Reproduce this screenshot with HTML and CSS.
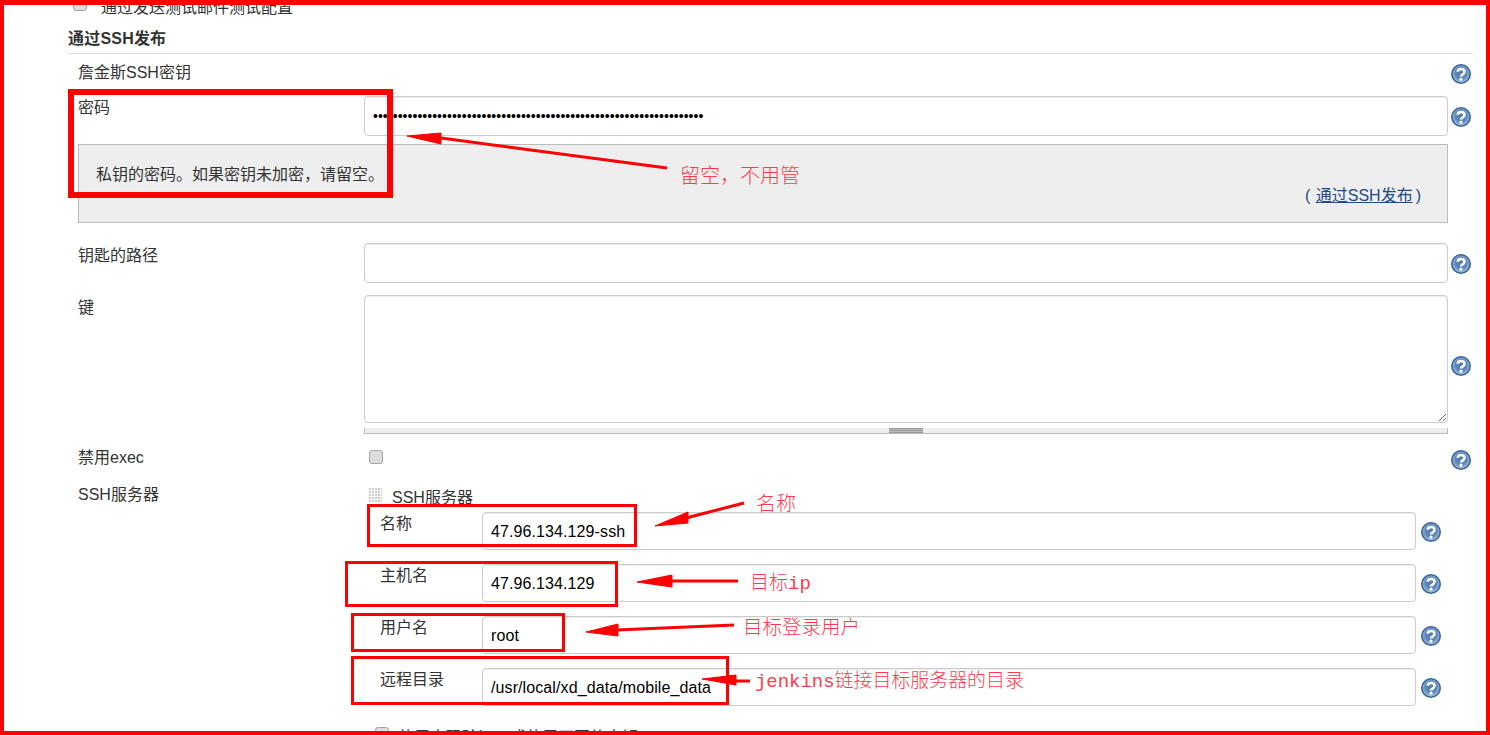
FILE: index.html
```html
<!DOCTYPE html>
<html lang="zh-CN">
<head>
<meta charset="utf-8">
<title>通过SSH发布</title>
<link rel="stylesheet" href="styles.css">
</head>
<body>
<svg class="defs" width="0" height="0" aria-hidden="true">
  <defs>
    <radialGradient id="helpfill" cx="50%" cy="45%" r="58%">
      <stop offset="0" stop-color="#4f7ab2"/>
      <stop offset="0.6" stop-color="#5f88bc"/>
      <stop offset="1" stop-color="#b4c8e0"/>
    </radialGradient>
    <symbol id="help" viewBox="0 0 20 20">
      <circle cx="10" cy="10" r="10" fill="#36649e"/>
      <circle cx="10" cy="10" r="8.4" fill="url(#helpfill)"/>
      <path d="M6.7 7.8C6.8 4.3 13.4 4.1 13.5 7.9C13.6 10.5 10 10.2 10 12.6" fill="none" stroke="#fff" stroke-width="2.5"/>
      <circle cx="10" cy="15.2" r="1.6" fill="#fff"/>
    </symbol>
  </defs>
</svg>

<main class="page">
  <div class="top-row">
    <input class="check check-top" type="checkbox">
    <span>通过发送测试邮件测试配置</span>
  </div>
  <h2 class="heading">通过SSH发布</h2>

  <div class="form">
    <div class="row row-first">
      <div class="label">詹金斯SSH密钥</div>
      <div></div>
      <svg class="help"><use href="#help"/></svg>
    </div>

    <div class="row">
      <div class="label label-top2">密码</div>
      <input class="field field-40 field-pass" type="password" value="...................................................................">
      <svg class="help help-mid"><use href="#help"/></svg>
    </div>

    <div class="helpbox">
      <div>私钥的密码。如果密钥未加密，请留空。</div>
      <div class="helpbox-from">( <a href="#">通过SSH发布</a>)</div>
    </div>

    <div class="row row-path">
      <div class="label label-top3">钥匙的路径</div>
      <input class="field field-40" type="text">
      <svg class="help help-mid"><use href="#help"/></svg>
    </div>

    <div class="row row-key">
      <div class="label label-top3">键</div>
      <div>
        <textarea class="field area"></textarea>
        <div class="grippie"><span class="grippie-handle"></span></div>
      </div>
      <svg class="help help-area"><use href="#help"/></svg>
    </div>

    <div class="row row-exec">
      <div class="label">禁用exec</div>
      <div class="exec-box"><input class="check" type="checkbox"></div>
      <svg class="help help-exec"><use href="#help"/></svg>
    </div>

    <div class="row row-servers">
      <div class="label label-top1">SSH服务器</div>
      <div class="servers">
        <div class="server-head"><span class="drag"></span><span class="server-title">SSH服务器</span></div>
        <div class="inner"><div class="label label-inner">名称</div><input class="field field-38" type="text" value="47.96.134.129-ssh"><svg class="help help-inner"><use href="#help"/></svg></div>
        <div class="inner"><div class="label label-inner">主机名</div><input class="field field-38" type="text" value="47.96.134.129"><svg class="help help-inner"><use href="#help"/></svg></div>
        <div class="inner"><div class="label label-inner">用户名</div><input class="field field-38" type="text" value="root"><svg class="help help-inner"><use href="#help"/></svg></div>
        <div class="inner"><div class="label label-inner">远程目录</div><input class="field field-38" type="text" value="/usr/local/xd_data/mobile_data"><svg class="help help-inner"><use href="#help"/></svg></div>
        <div class="inner inner-last">
          <div class="last-check"><input class="check" type="checkbox"><span class="last-text">使用密码验证，或使用不同的密钥</span></div>
          <svg class="help help-inner"><use href="#help"/></svg>
        </div>
      </div>
      <div></div>
    </div>
  </div>

  <!-- screenshot annotations drawn on top -->
  <svg class="arrows" viewBox="0 0 1490 735" aria-hidden="true">
    <g fill="#f00" stroke="#f00" stroke-linejoin="round">
      <path d="M441 138L667 168" stroke-width="3" fill="none"/>
      <path d="M407 136L441 133L441 144Z" stroke-width="1"/>
      <path d="M686 518L744 503" stroke-width="3" fill="none"/>
      <path d="M655 526L688 512L688 523Z" stroke-width="1"/>
      <path d="M670 581L738 581" stroke-width="3" fill="none"/>
      <path d="M637 582L672 575L672 587Z" stroke-width="1"/>
      <path d="M616 630L734 625" stroke-width="3" fill="none"/>
      <path d="M586 632L618 624L618 636Z" stroke-width="1"/>
      <path d="M734 681L750 681" stroke-width="3" fill="none"/>
      <path d="M702 679L736 675L736 685Z" stroke-width="1"/>
    </g>
  </svg>
  <div class="mark mark-pass"></div>
  <div class="mark mark-name"></div>
  <div class="mark mark-host"></div>
  <div class="mark mark-user"></div>
  <div class="mark mark-dir"></div>
  <span class="note note-pass">留空，不用管</span>
  <span class="note note-name">名称</span>
  <span class="note note-host">目标ip</span>
  <span class="note note-user">目标登录用户</span>
  <span class="note note-dir">jenkins链接目标服务器的目录</span>
  <div class="frame"></div>
</main>
</body>
</html>
```

FILE: styles.css
```css
* { box-sizing: border-box; }

html, body {
  margin: 0;
  padding: 0;
  background: #fff;
}

.defs { position: absolute; }

.page {
  position: relative;
  width: 1490px;
  height: 735px;
  overflow: hidden;
  padding: 0 17px 0 68px;
  font-family: "Liberation Sans", "Noto Sans CJK SC", sans-serif;
  font-size: 16px;
  line-height: 20px;
  color: #333;
}

.top-row {
  display: flex;
  align-items: center;
  height: 20px;
  margin-top: -3px;
  padding-left: 5px;
  gap: 14px;
}

.top-row span { padding-top: 1px; }

.check {
  appearance: none;
  display: block;
  flex: none;
  width: 14px;
  height: 14px;
  margin: 0;
  background: #ddd;
  border: 1px solid #a5a5a5;
  border-radius: 3px;
}

.check-top { margin-top: -6px; }

.heading {
  height: 29px;
  margin: 8px 0 0;
  padding-top: 1px;
  border-bottom: 1px solid #ddd;
  font-size: 16px;
  font-weight: bold;
  line-height: 26px;
  letter-spacing: .2px;
}

.form { padding-left: 10px; }

.row {
  display: grid;
  grid-template-columns: 286px 1084px 23px;
  align-items: start;
}

.row-first { height: 42px; padding-top: 9px; }
.row-path { margin-top: 20px; }
.row-key { margin-top: 12px; }
.row-exec { margin-top: 14px; }
.row-servers { margin-top: 14px; }

.label-top1 { padding-top: 1px; }
.label-top2 { padding-top: 2px; }
.label-top3 { padding-top: 3px; }

.help {
  display: block;
  width: 20px;
  height: 20px;
  margin-left: 3px;
}

.row-first .help { margin-top: 1px; }
.help-mid { margin-top: 11px; }
.help-area { margin-top: 61px; }
.help-exec { margin-top: 2px; }

.field {
  display: block;
  width: 100%;
  margin: 0;
  padding: 2px 8px 0;
  background: #fff;
  border: 1px solid #ccc;
  border-radius: 4px;
  box-shadow: inset 0 1px 1px rgba(0, 0, 0, .075);
  outline: none;
  font-family: "Liberation Sans", sans-serif;
  font-size: 16px;
  letter-spacing: .1px;
  color: #000;
}

.field-40 { height: 40px; }
.field-38 { height: 38px; }
.field-pass { font-size: 14px; padding-top: 0; letter-spacing: .03px; }

.area {
  height: 128px;
  resize: vertical;
}

.helpbox {
  height: 79px;
  margin: 8px 0 0;
  width: 1370px;
  padding: 20px 26px 0 17px;
  background: #eee;
  border: 1px solid #bbb;
}

.helpbox-from {
  margin-top: 1px;
  text-align: right;
  color: #204a87;
}

.helpbox-from a {
  margin: 0 3px 0 1px;
  color: #204a87;
}

.grippie {
  display: flex;
  justify-content: center;
  height: 6px;
  margin-top: 5px;
  background: #eee;
  border-left: 1px solid #bbb;
  border-right: 1px solid #bbb;
  border-bottom: 1px solid #bbb;
}

.grippie-handle {
  width: 34px;
  height: 5px;
  background: repeating-linear-gradient(#999 0, #999 1px, #bbb 1px, #bbb 2px);
}

.exec-box { padding: 2px 0 0 5px; }

.servers { padding-top: 3px; }

.server-head {
  display: flex;
  height: 25px;
  padding-left: 4px;
  gap: 10px;
}

.server-title { padding-top: 1px; }

.drag {
  width: 14px;
  height: 16px;
  background-color: #ccc;
  background-image:
    linear-gradient(90deg, #fff 1px, transparent 1px),
    linear-gradient(#fff 1px, transparent 1px);
  background-size: 3px 3px;
}

.inner {
  display: grid;
  grid-template-columns: 118px 934px 25px;
  align-items: start;
  margin-bottom: 14px;
}

.label-inner { padding: 2px 0 0 16px; }

.help-inner {
  margin-top: 10px;
  margin-left: 5px;
}

.inner-last { margin-top: 21px; }

.last-check {
  grid-column: 1 / span 2;
  display: flex;
  padding-left: 11px;
  gap: 9px;
}

.last-text { padding-top: 1px; }

/* annotations layered over the form */
.arrows {
  position: absolute;
  top: 0;
  left: 0;
  width: 1490px;
  height: 735px;
  pointer-events: none;
}

.mark {
  position: absolute;
  border: 3px solid #f00;
  pointer-events: none;
}

.mark-pass { left: 68px; top: 89px; width: 325px; height: 109px; border-width: 6px; }
.mark-name { left: 367px; top: 504px; width: 270px; height: 43px; }
.mark-host { left: 345px; top: 561px; width: 273px; height: 46px; }
.mark-user { left: 351px; top: 613px; width: 214px; height: 39px; }
.mark-dir { left: 351px; top: 656px; width: 378px; height: 49px; }

.note {
  position: absolute;
  font-family: "Liberation Mono", "Noto Sans CJK SC", monospace;
  font-size: 20px;
  font-weight: 300;
  line-height: 24px;
  color: #ff3a4c;
  white-space: nowrap;
}

.note-pass { left: 680px; top: 166px; }
.note-name { left: 756px; top: 494px; }
.note-host { left: 750px; top: 572px; font-size: 19px; }
.note-user { left: 743px; top: 617px; font-size: 19.5px; }
.note-dir { left: 755px; top: 670px; font-size: 18.95px; }

.frame {
  position: absolute;
  top: 0;
  left: 0;
  width: 1490px;
  height: 735px;
  border: solid #f00;
  border-width: 5px 4px 4px;
  pointer-events: none;
}
```
